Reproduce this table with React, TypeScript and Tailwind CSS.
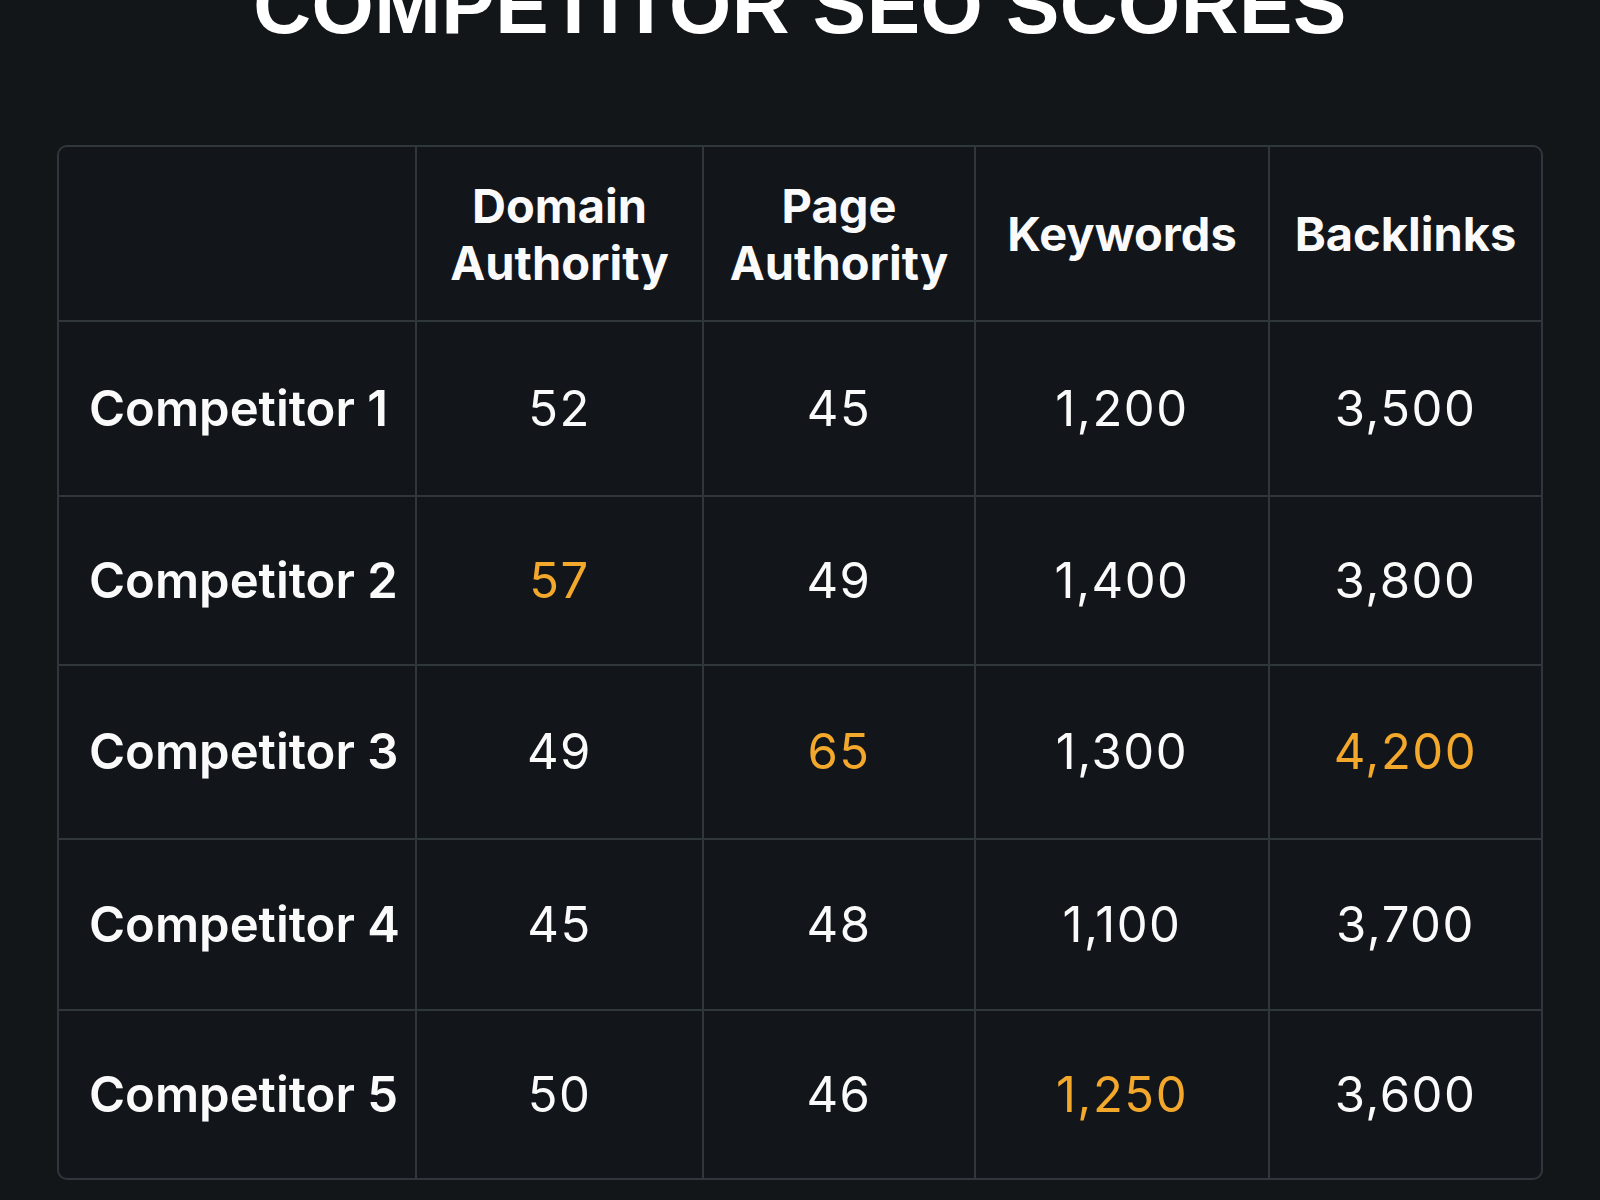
const columns = ["", "Domain\nAuthority", "Page\nAuthority", "Keywords", "Backlinks"];

const rows = [
  { name: "Competitor 1", values: ["52", "45", "1,200", "3,500"], hl: [] as number[] },
  { name: "Competitor 2", values: ["57", "49", "1,400", "3,800"], hl: [0] },
  { name: "Competitor 3", values: ["49", "65", "1,300", "4,200"], hl: [1, 3] },
  { name: "Competitor 4", values: ["45", "48", "1,100", "3,700"], hl: [] as number[] },
  { name: "Competitor 5", values: ["50", "46", "1,250", "3,600"], hl: [2] },
];

export default function App() {
  return (
    <div className="flex min-h-screen flex-col bg-[#121619] font-['Inter',sans-serif] text-[#fafafa]">
      <h1 className="-mt-[34px] text-center font-['Liberation_Sans',Arial,sans-serif] text-[80px] font-bold leading-[80px] tracking-[0.5px] text-white">
        COMPETITOR SEO SCORES
      </h1>

      <div className="mx-[57px] mt-[99px] overflow-hidden rounded-[10px] border-2 border-[#30373c] bg-[#12161a]">
        <div className="grid grid-cols-[358px_287px_272px_294px_271px] grid-rows-[175px_175px_169px_174px_171px_167px]">
          {columns.map((c, i) => (
            <div
              key={"h" + i}
              className={`flex items-center justify-center border-b-2 border-[#30373c] text-center text-[47px] font-bold leading-[57px] whitespace-pre-line ${i < 4 ? "border-r-2" : ""}`}
            >
              {c}
            </div>
          ))}

          {rows.map((r, ri) => {
            const last = ri === rows.length - 1;
            return [
              <div
                key={r.name}
                className={`flex items-center border-r-2 border-[#30373c] pl-[30px] text-[49px] font-semibold ${last ? "" : "border-b-2"}`}
              >
                {r.name}
              </div>,
              ...r.values.map((v, vi) => (
                <div
                  key={r.name + vi}
                  className={`flex items-center justify-center border-[#30373c] text-[49px] font-normal tracking-[1.5px] ${vi < 3 ? "border-r-2" : ""} ${last ? "" : "border-b-2"} ${r.hl.includes(vi) ? "text-[#f3a82c]" : ""}`}
                >
                  {v}
                </div>
              )),
            ];
          })}
        </div>
      </div>
    </div>
  );
}
